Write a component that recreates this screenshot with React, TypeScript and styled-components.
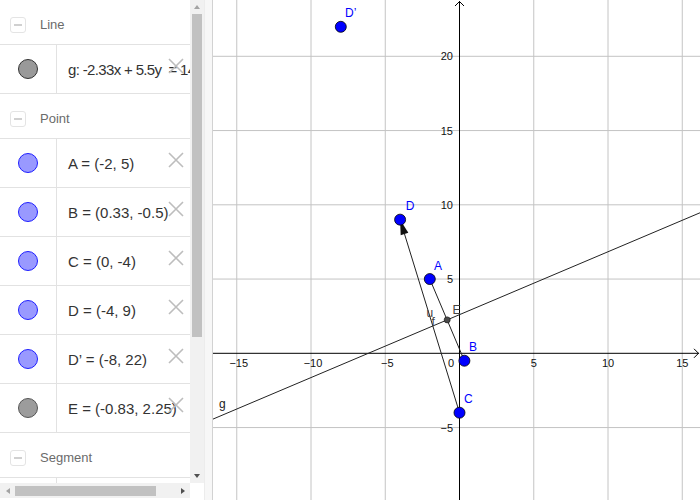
import React from 'react';
import styled, { createGlobalStyle } from 'styled-components';

const GlobalStyle = createGlobalStyle`
    html, body {
        margin: 0;
        padding: 0;
        width: 700px;
        height: 500px;
        overflow: hidden;
        background: #fff;
        font-family: 'Liberation Sans', Arial, sans-serif;
    }
`;

const Page = styled.div`
    display: flex;
    width: 700px;
    height: 500px;
    background: #fff;
`;

const AlgebraPanel = styled.div`
    display: grid;
    grid-template-columns: 190px 14px;
    grid-template-rows: 483px 17px;
    width: 204px;
    flex-shrink: 0;
`;

const ItemList = styled.div`
    overflow: hidden;
`;

const GroupHeader = styled.div`
    box-sizing: border-box;
    height: 45px;
    padding: 5px 0 0 10px;
    display: flex;
    align-items: center;
    border-bottom: 1px solid #e2e2e2;
`;

const CollapseBox = styled.div`
    box-sizing: border-box;
    width: 16px;
    height: 16px;
    border: 1px solid #e4e4e4;
    border-radius: 3px;
    display: flex;
    align-items: center;
    justify-content: center;

    &::after {
        content: '';
        width: 8px;
        height: 2px;
        background: #d0d0d0;
    }
`;

const GroupTitle = styled.span`
    margin-left: 14px;
    font-size: 13px;
    color: #6b6b6b;
`;

const ItemRow = styled.div<{ $short?: boolean }>`
    box-sizing: border-box;
    height: ${(p) => (p.$short ? '20px' : '49px')};
    display: flex;
    border-bottom: 1px solid #e2e2e2;
`;

const MarkerCell = styled.div`
    box-sizing: border-box;
    width: 57px;
    flex-shrink: 0;
    border-right: 1px solid #e2e2e2;
    display: flex;
    align-items: center;
    justify-content: center;
`;

const Marker = styled.div<{ $fill: string; $stroke: string }>`
    box-sizing: border-box;
    width: 20px;
    height: 20px;
    border-radius: 50%;
    background: ${(p) => p.$fill};
    border: 1px solid ${(p) => p.$stroke};
`;

const Definition = styled.div<{ $compact?: boolean }>`
    position: relative;
    flex: 1;
    min-width: 0;
    display: flex;
    align-items: center;
    padding-left: 11px;
    font-size: 15px;
    letter-spacing: ${(p) => (p.$compact ? '-0.65px' : 'normal')};
    color: #333;
    white-space: pre;
`;

const DeleteButton = styled.div`
    position: absolute;
    right: 6px;
    top: 13px;
    width: 16px;
    height: 16px;
`;

const VScroll = styled.div`
    background: #f1f1f1;
    display: flex;
    flex-direction: column;
    align-items: center;
`;

const HScroll = styled.div`
    height: 15px;
    background: #f1f1f1;
    display: flex;
    align-items: center;
`;

const Corner = styled.div`
    background: #fff;
`;

const ArrowSlot = styled.div<{ $size: number }>`
    width: ${(p) => p.$size}px;
    height: ${(p) => p.$size}px;
    flex-shrink: 0;
    display: flex;
    align-items: center;
    justify-content: center;
`;

type Dir = 'up' | 'down' | 'left' | 'right';

const Triangle = styled.div<{ $dir: Dir; $dark?: boolean }>`
    width: 0;
    height: 0;
    ${(p) => {
        const c = p.$dark ? '#505050' : '#a3a3a3';
        switch (p.$dir) {
            case 'up':
                return `border-left: 3.5px solid transparent; border-right: 3.5px solid transparent; border-bottom: 4px solid ${c};`;
            case 'down':
                return `border-left: 3.5px solid transparent; border-right: 3.5px solid transparent; border-top: 4px solid ${c};`;
            case 'left':
                return `border-top: 3.5px solid transparent; border-bottom: 3.5px solid transparent; border-right: 4px solid ${c};`;
            default:
                return `border-top: 3.5px solid transparent; border-bottom: 3.5px solid transparent; border-left: 4px solid ${c};`;
        }
    }}
`;

const VThumb = styled.div`
    width: 10px;
    height: 323px;
    background: #c1c1c1;
`;

const HThumb = styled.div`
    width: 141px;
    height: 10px;
    background: #c1c1c1;
`;

const Spacer = styled.div`
    flex: 1;
`;

const Divider = styled.div`
    box-sizing: border-box;
    width: 9px;
    flex-shrink: 0;
    background: #f7f7f7;
    border-left: 1px solid #ececec;
    border-right: 1px solid #d2d2d2;
`;

const GraphView = styled.div`
    flex: 1;
    height: 500px;
    overflow: hidden;

    svg {
        display: block;
    }
`;

// ---------- data ----------

type Item = { def: string; fill: string; stroke: string; compact?: boolean };

const POINT_FILL = '#9999ff';
const POINT_STROKE = '#1f1fff';

const groups: { title: string; items: Item[] }[] = [
    { title: 'Line', items: [{ def: 'g: -2.33x + 5.5y  = 14.31', fill: '#999', stroke: '#333', compact: true }] },
    {
        title: 'Point',
        items: [
            { def: 'A = (-2, 5)', fill: POINT_FILL, stroke: POINT_STROKE },
            { def: 'B = (0.33, -0.5)', fill: POINT_FILL, stroke: POINT_STROKE },
            { def: 'C = (0, -4)', fill: POINT_FILL, stroke: POINT_STROKE },
            { def: 'D = (-4, 9)', fill: POINT_FILL, stroke: POINT_STROKE },
            { def: 'D\u2019 = (-8, 22)', fill: POINT_FILL, stroke: POINT_STROKE },
            { def: 'E = (-0.83, 2.25)', fill: '#9c9c9c', stroke: '#555' },
        ],
    },
    { title: 'Segment', items: [] },
];

const DeleteIcon = () => (
    <svg width="16" height="16" viewBox="0 0 16 16">
        <path d="M1 1 L15 15 M15 1 L1 15" stroke="#bdbdbd" strokeWidth="1.6" fill="none" />
    </svg>
);

// ---------- graphics view ----------

const W = 487;
const H = 500;
const S = 14.85;
const OX = 246.5;
const OY = 353.3;
const px = (x: number) => OX + x * S;
const py = (y: number) => OY - y * S;

const FONT = "'Liberation Sans', Arial, sans-serif";

const gLineY = (x: number) => (14.31 + 2.33 * x) / 5.5;

const Graph = () => {
    const xGrid = [-15, -10, -5, 5, 10, 15];
    const yGrid = [-5, 5, 10, 15, 20];
    const xLeft = (0 - OX) / S;
    const xRight = (W - OX) / S;

    const C = { x: px(0), y: py(-4) };
    const D = { x: px(-4), y: py(9) };
    const dx = D.x - C.x;
    const dy = D.y - C.y;
    const len = Math.hypot(dx, dy);
    const ux = dx / len;
    const uy = dy / len;
    const baseX = D.x - ux * 15;
    const baseY = D.y - uy * 15;
    const head = `${D.x},${D.y} ${baseX - uy * 4},${baseY + ux * 4} ${baseX + uy * 4},${baseY - ux * 4}`;

    const points = [
        { x: px(-2), y: py(5) },
        { x: px(0.33), y: py(-0.5) },
        C,
        D,
        { x: 127.8, y: 26.8 },
    ];

    return (
        <svg width={W} height={H} viewBox={`0 0 ${W} ${H}`}>
            {xGrid.map((v) => (
                <line key={`gx${v}`} x1={px(v)} y1={0} x2={px(v)} y2={H} stroke="#c4c4c4" strokeWidth="1" />
            ))}
            {yGrid.map((v) => (
                <line key={`gy${v}`} x1={0} y1={py(v)} x2={W} y2={py(v)} stroke="#c4c4c4" strokeWidth="1" />
            ))}

            <line x1={0} y1={OY} x2={W - 1} y2={OY} stroke="#000" strokeWidth="1" />
            <polyline points={`${W - 6},${OY - 4.5} ${W - 1.5},${OY} ${W - 6},${OY + 4.5}`} stroke="#000" fill="none" strokeWidth="1" />
            <line x1={OX} y1={H} x2={OX} y2={1} stroke="#000" strokeWidth="1" />
            <polyline points={`${OX - 4.5},${6} ${OX},${1.5} ${OX + 4.5},${6}`} stroke="#000" fill="none" strokeWidth="1" />

            <g fontFamily={FONT} fontSize="11" fill="#111">
                {xGrid.map((v) => (
                    <text key={`lx${v}`} x={px(v) + (v < 0 ? 2 : 0)} y={367} textAnchor="middle">
                        {v < 0 ? `\u2212${-v}` : v}
                    </text>
                ))}
                {yGrid.map((v) => (
                    <text key={`ly${v}`} x={240} y={py(v) + 4} textAnchor="end">
                        {v < 0 ? `\u2212${-v}` : v}
                    </text>
                ))}
                <text x={238} y={367} textAnchor="middle">0</text>
            </g>

            <line x1={0} y1={py(gLineY(xLeft))} x2={W} y2={py(gLineY(xRight))} stroke="#222" strokeWidth="1" />
            <line x1={px(-2)} y1={py(5)} x2={px(0.33)} y2={py(-0.5)} stroke="#222" strokeWidth="1" />
            <line x1={C.x} y1={C.y} x2={baseX} y2={baseY} stroke="#222" strokeWidth="1" />
            <polygon points={head} fill="#111" />

            <circle cx={px(-0.83)} cy={py(2.25)} r="3" fill="#4a4a4a" stroke="#222" strokeWidth="0.8" />

            {points.map((p, i) => (
                <circle key={i} cx={p.x} cy={p.y} r="5.5" fill="#0000ff" stroke="#000" strokeWidth="0.8" />
            ))}

            <g fontFamily={FONT} fontSize="12" fill="#0000ff">
                <text x={132} y={17}>D&#8217;</text>
                <text x={192.7} y={210}>D</text>
                <text x={221} y={270}>A</text>
                <text x={256} y={351}>B</text>
                <text x={251} y={403}>C</text>
            </g>
            <g fontFamily={FONT} fontSize="12" fill="#444">
                <text x={239.5} y={314}>E</text>
                <text x={213.5} y={317}>u</text>
                <text x={218.5} y={326}>f</text>
            </g>
            <text x={6} y={408} fontFamily={FONT} fontSize="12" fill="#222">g</text>
        </svg>
    );
};

const App: React.FC = () => {
    return (
        <>
            <GlobalStyle />
            <Page>
                <AlgebraPanel>
                    <ItemList>
                        {groups.map((group) => (
                            <React.Fragment key={group.title}>
                                <GroupHeader>
                                    <CollapseBox />
                                    <GroupTitle>{group.title}</GroupTitle>
                                </GroupHeader>
                                {group.items.map((item) => (
                                    <ItemRow key={item.def}>
                                        <MarkerCell>
                                            <Marker $fill={item.fill} $stroke={item.stroke} />
                                        </MarkerCell>
                                        <Definition $compact={item.compact}>
                                            {item.def}
                                            <DeleteButton>
                                                <DeleteIcon />
                                            </DeleteButton>
                                        </Definition>
                                    </ItemRow>
                                ))}
                            </React.Fragment>
                        ))}
                        <ItemRow $short>
                            <MarkerCell />
                        </ItemRow>
                    </ItemList>
                    <VScroll>
                        <ArrowSlot $size={14}>
                            <Triangle $dir="up" />
                        </ArrowSlot>
                        <VThumb />
                        <Spacer />
                        <ArrowSlot $size={14}>
                            <Triangle $dir="down" $dark />
                        </ArrowSlot>
                    </VScroll>
                    <HScroll>
                        <ArrowSlot $size={15}>
                            <Triangle $dir="left" />
                        </ArrowSlot>
                        <HThumb />
                        <Spacer />
                        <ArrowSlot $size={14}>
                            <Triangle $dir="right" $dark />
                        </ArrowSlot>
                    </HScroll>
                    <Corner />
                </AlgebraPanel>
                <Divider />
                <GraphView>
                    <Graph />
                </GraphView>
            </Page>
        </>
    );
};

export default App;
